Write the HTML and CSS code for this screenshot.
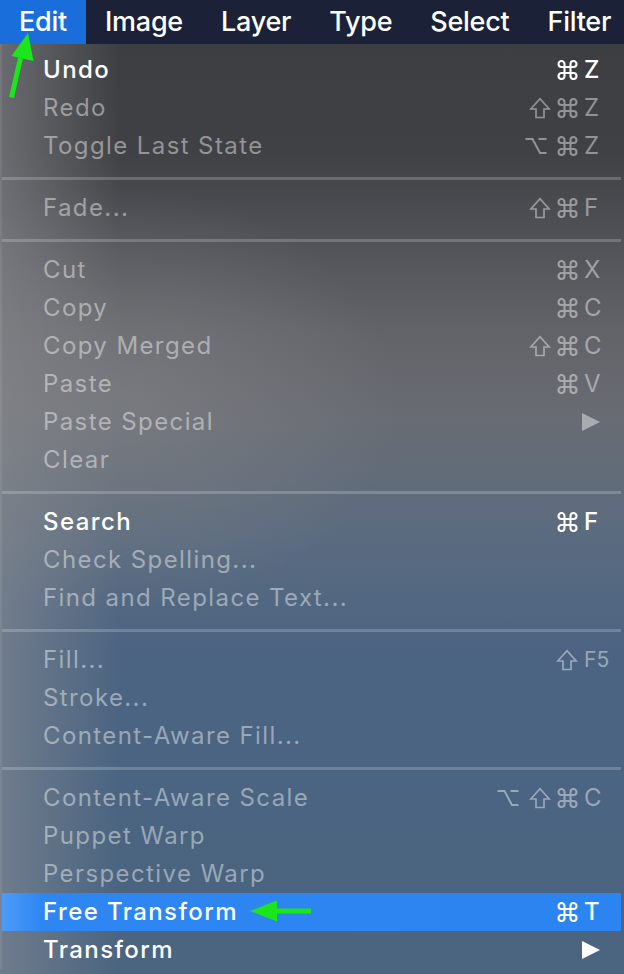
FILE: index.html
```html
<!DOCTYPE html>
<html>
<head>
<meta charset="utf-8">
<link rel="stylesheet" href="styles.css">
</head>
<body>
<svg class="defs" width="0" height="0">
  <symbol id="cmd" viewBox="2 2 20 20"><path d="M15 6v12a3 3 0 1 0 3-3H6a3 3 0 1 0 3 3V6a3 3 0 1 0-3 3h12a3 3 0 1 0-3-3" fill="none" stroke="currentColor" stroke-width="2.1"/></symbol>
  <symbol id="shift" viewBox="0 0 22 22"><path d="M7 20.5V12H1.8L11 1.8 20.2 12H15v8.5Z" fill="none" stroke="currentColor" stroke-width="1.7"/></symbol>
  <symbol id="opt" viewBox="0 0 22 18"><path d="M0.5 2H7.5L15 16H21.5M13.5 2H21.5" fill="none" stroke="currentColor" stroke-width="2"/></symbol>
  <symbol id="tri" viewBox="0 0 18 18"><path d="M0 0L18 9L0 18Z" fill="currentColor"/></symbol>
</svg>
<div class="page">
  <div class="menubar">
    <div class="mb-item active">Edit</div>
    <div class="mb-item">Image</div>
    <div class="mb-item">Layer</div>
    <div class="mb-item">Type</div>
    <div class="mb-item">Select</div>
    <div class="mb-item">Filter</div>
  </div>
  <div class="menu">
    <div class="section first">
      <div class="row on"><span class="label">Undo</span><span class="sc"><span class="mods"><svg class="i-cmd"><use href="#cmd"/></svg></span><span class="key">Z</span></span></div>
      <div class="row"><span class="label">Redo</span><span class="sc"><span class="mods"><svg class="i-shift"><use href="#shift"/></svg><svg class="i-cmd"><use href="#cmd"/></svg></span><span class="key">Z</span></span></div>
      <div class="row"><span class="label">Toggle Last State</span><span class="sc"><span class="mods"><svg class="i-opt"><use href="#opt"/></svg><svg class="i-cmd"><use href="#cmd"/></svg></span><span class="key">Z</span></span></div>
    </div>
    <div class="sep"></div>
    <div class="section">
      <div class="row"><span class="label">Fade...</span><span class="sc"><span class="mods"><svg class="i-shift"><use href="#shift"/></svg><svg class="i-cmd"><use href="#cmd"/></svg></span><span class="key">F</span></span></div>
    </div>
    <div class="sep"></div>
    <div class="section">
      <div class="row"><span class="label">Cut</span><span class="sc"><span class="mods"><svg class="i-cmd"><use href="#cmd"/></svg></span><span class="key">X</span></span></div>
      <div class="row"><span class="label">Copy</span><span class="sc"><span class="mods"><svg class="i-cmd"><use href="#cmd"/></svg></span><span class="key">C</span></span></div>
      <div class="row"><span class="label">Copy Merged</span><span class="sc"><span class="mods"><svg class="i-shift"><use href="#shift"/></svg><svg class="i-cmd"><use href="#cmd"/></svg></span><span class="key">C</span></span></div>
      <div class="row"><span class="label">Paste</span><span class="sc"><span class="mods"><svg class="i-cmd"><use href="#cmd"/></svg></span><span class="key">V</span></span></div>
      <div class="row"><span class="label">Paste Special</span><span class="sc"><span class="mods"></span><span class="key"><svg class="i-tri"><use href="#tri"/></svg></span></span></div>
      <div class="row"><span class="label">Clear</span></div>
    </div>
    <div class="sep"></div>
    <div class="section">
      <div class="row on"><span class="label">Search</span><span class="sc"><span class="mods"><svg class="i-cmd"><use href="#cmd"/></svg></span><span class="key">F</span></span></div>
      <div class="row"><span class="label">Check Spelling...</span></div>
      <div class="row"><span class="label">Find and Replace Text...</span></div>
    </div>
    <div class="sep"></div>
    <div class="section">
      <div class="row"><span class="label">Fill...</span><span class="sc"><span class="mods"><svg class="i-shift"><use href="#shift"/></svg></span><span class="key fkey">F5</span></span></div>
      <div class="row"><span class="label">Stroke...</span></div>
      <div class="row"><span class="label">Content-Aware Fill...</span></div>
    </div>
    <div class="sep"></div>
    <div class="section">
      <div class="row"><span class="label">Content-Aware Scale</span><span class="sc"><span class="mods"><svg class="i-opt"><use href="#opt"/></svg><svg class="i-shift"><use href="#shift"/></svg><svg class="i-cmd"><use href="#cmd"/></svg></span><span class="key">C</span></span></div>
      <div class="row"><span class="label">Puppet Warp</span></div>
      <div class="row"><span class="label">Perspective Warp</span></div>
      <div class="row on hl"><span class="label">Free Transform</span><span class="sc"><span class="mods"><svg class="i-cmd"><use href="#cmd"/></svg></span><span class="key">T</span></span></div>
      <div class="row on"><span class="label">Transform</span><span class="sc"><span class="mods"></span><span class="key"><svg class="i-tri"><use href="#tri"/></svg></span></span></div>
    </div>
  </div>
  <svg class="arrows" width="624" height="974" viewBox="0 0 624 974">
    <path d="M11.5 97.5L20.5 58" stroke="#1be51b" stroke-width="5" fill="none"/>
    <path d="M28 33L11.5 56L33.5 61Z" fill="#1be51b"/>
    <path d="M250 911L277 900.5L277 921.5Z" fill="#1be51b"/>
    <rect x="275" y="908.5" width="36" height="5" fill="#1be51b"/>
  </svg>
</div>
</body>
</html>
```
FILE: styles.css
```css
html, body {
  margin: 0;
  padding: 0;
  background: #4a6380;
}
body {
  font-family: Inter, "Noto Sans", "DejaVu Sans", sans-serif;
  width: 624px;
  height: 974px;
  overflow: hidden;
}
.defs {
  position: absolute;
  width: 0;
  height: 0;
  overflow: hidden;
}
.page {
  position: relative;
  width: 624px;
  height: 974px;
  background:
    radial-gradient(ellipse 280px 210px at 120px 400px, rgba(130,132,136,0.6), rgba(130,132,136,0) 100%),
    linear-gradient(90deg, rgba(140,143,148,0.55) 0px, rgba(140,143,148,0) 120px),
    linear-gradient(180deg, #3c3d41 0px, #404145 150px, #4f5055 230px, #626368 330px, #686c73 420px, #5a6b80 540px, #4c6482 650px, #4a6481 800px, #4b6480 974px);
}
.menubar {
  display: flex;
  height: 44px;
  background: #1b2136;
  color: #fff;
  font-size: 27px;
  font-weight: 500;
  letter-spacing: -0.25px;
  line-height: 44px;
}
.mb-item {
  padding: 0 19px;
}
.mb-item.active {
  background: #1a6edc;
}
.menu {
  width: 621px;
  padding-top: 7px;
  border-left: 2px solid rgba(255,255,255,0.08);
  box-sizing: border-box;
}
.row {
  display: flex;
  align-items: center;
  justify-content: space-between;
  height: 38px;
  padding-left: 41px;
  font-size: 24px;
  line-height: 38px;
  letter-spacing: 1.4px;
  color: rgba(255,255,255,0.44);
}
.row.on {
  color: #fff;
  font-weight: 500;
}
.row.hl {
  background: linear-gradient(90deg, #4d9cf8 0px, #2d86f2 40px, #2b84f0 100%);
}
.sep {
  height: 3px;
  margin: 12px 0 9px;
  background: rgba(255,255,255,0.2);
}
.sc {
  display: flex;
  align-items: center;
  height: 38px;
  letter-spacing: 0;
}
.mods {
  display: flex;
  align-items: center;
  gap: 6px;
}
.key {
  width: 43px;
  padding-left: 6px;
  box-sizing: border-box;
  display: flex;
  align-items: center;
}
.fkey {
  font-size: 21px;
  font-weight: 400;
}
.i-cmd {
  width: 21px;
  height: 20px;
}
.i-shift {
  width: 22px;
  height: 22px;
}
.i-opt {
  width: 22px;
  height: 18px;
  margin-right: 4px;
}
.i-tri {
  width: 18px;
  height: 18px;
  margin-left: -2px;
}
.arrows {
  position: absolute;
  left: 0;
  top: 0;
  pointer-events: none;
}
```
